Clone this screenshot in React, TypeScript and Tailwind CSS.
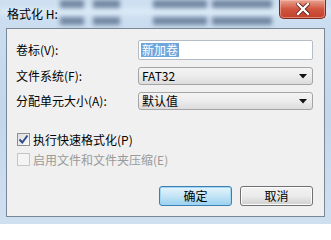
import React from "react";

const font = { fontFamily: '"Noto Sans CJK SC", "Liberation Sans", sans-serif' };

// blurred shapes behind the aero title bar
const blobs = [
  { l: 60, w: 24 },
  { l: 93, w: 27 },
  { l: 153, w: 54 },
  { l: 212, w: 60 },
];

function Combo({ value }: { value: string }) {
  return (
    <div className="flex items-center justify-between w-[175px] h-[18px] border border-[#a5a5a5] rounded-[3px] bg-gradient-to-b from-[#f4f4f4] via-[#ececec] to-[#dcdcdc] pl-[3px] pr-[5px]">
      <span className="text-[12px] leading-none text-black">{value}</span>
      <svg width="8" height="5" viewBox="0 0 8 5">
        <path d="M0 0 H8 L4 4.5 Z" fill="#111" />
      </svg>
    </div>
  );
}

function Check({ checked, disabled, label }: { checked?: boolean; disabled?: boolean; label: string }) {
  return (
    <div className="flex items-center gap-[3px] h-[13px]">
      <div
        className={`w-[13px] h-[13px] border flex items-center justify-center ${
          disabled ? "border-[#c6c6c6] bg-[#f4f4f4]" : "border-[#8e8f8f] bg-gradient-to-br from-[#dcdcdc] to-[#fbfbfb]"
        }`}
      >
        {checked && (
          <svg width="11" height="11" viewBox="0 0 11 11">
            <path d="M1.5 5.5 L4.3 8.5 L9.5 1.5" stroke="#2c4b8e" strokeWidth="2" fill="none" />
          </svg>
        )}
      </div>
      <span className={`text-[12px] leading-none ${disabled ? "text-[#9a9a9a]" : "text-black"}`}>{label}</span>
    </div>
  );
}

export default function App() {
  return (
    <div
      style={font}
      className="relative w-[331px] h-[224px] overflow-hidden flex flex-col bg-gradient-to-b from-[#cddff1] via-[#c3d6ea] to-[#cfe0f1]"
    >
      <div className="absolute left-0 right-0 top-[9px] h-[5px] bg-[#e6f0fa] blur-[3px]" />
      {blobs.map((b) => (
        <React.Fragment key={b.l}>
          <div
            className="absolute top-[0px] h-[8px] bg-[#7489a4] blur-[2px]"
            style={{ left: b.l, width: b.w }}
          />
          <div
            className="absolute top-[17px] h-[8px] bg-[#7489a4] blur-[2px]"
            style={{ left: b.l, width: b.w }}
          />
        </React.Fragment>
      ))}

      {/* title bar */}
      <div className="relative h-[28px] flex items-start justify-between pl-[7px]">
        <span className="mt-[8px] text-[12px] leading-none text-black">格式化 H:</span>
        <div className="mr-[5px] w-[47px] h-[19px] border border-t-0 border-[#7d2a1e] rounded-b-[5px] bg-gradient-to-b from-[#e8a493] via-[#d0553f] to-[#c4402a] flex items-center justify-center shadow-[inset_0_0_0_1px_rgba(255,200,190,0.5)]">
          <svg width="14" height="12" viewBox="0 0 14 12">
            <path d="M2 1 L12 11 M12 1 L2 11" stroke="#5a1a10" strokeWidth="4" strokeLinecap="square" />
            <path d="M2 1 L12 11 M12 1 L2 11" stroke="#ffffff" strokeWidth="2.4" strokeLinecap="square" />
          </svg>
        </div>
      </div>

      {/* client area */}
      <div className="relative mx-[6px] w-[319px] h-[189px] border border-[#7a8797] bg-[#f0f0f0] flex flex-col pl-[9px]">
        <div className="mt-[11px] flex items-center h-[20px]">
          <span className="w-[122px] text-[12px] leading-none text-black">卷标(V):</span>
          <div className="w-[175px] h-[20px] border border-[#b5bcc6] rounded-[2px] bg-white flex items-center pl-[2px]">
            <span className="bg-[#6fa6dc] text-white text-[12px] leading-[14px] px-[1px]">新加卷</span>
          </div>
        </div>
        <div className="mt-[7px] flex items-center h-[18px]">
          <span className="w-[122px] text-[12px] leading-none text-black">文件系统(F):</span>
          <Combo value="FAT32" />
        </div>
        <div className="mt-[7px] flex items-center h-[18px]">
          <span className="w-[122px] text-[12px] leading-none text-black">分配单元大小(A):</span>
          <Combo value="默认值" />
        </div>

        <div className="mt-[23px] flex flex-col gap-[7px] pl-[1px]">
          <Check checked label="执行快速格式化(P)" />
          <Check disabled label="启用文件和文件夹压缩(E)" />
        </div>

        <div className="mt-[20px] flex gap-[8px] pl-[143px]">
          <div className="w-[73px] h-[20px] rounded-[3px] border border-[#3c7fb1] bg-gradient-to-b from-[#e5f4fc] via-[#c4e5f6] to-[#98d1ef] flex items-center justify-center shadow-[inset_0_0_0_1px_#9fd6f5]">
            <span className="text-[12px] leading-none text-black">确定</span>
          </div>
          <div className="w-[73px] h-[20px] rounded-[3px] border border-[#707070] bg-gradient-to-b from-[#f2f2f2] via-[#ebebeb] to-[#cfcfcf] flex items-center justify-center shadow-[inset_0_0_0_1px_#fcfcfc]">
            <span className="text-[12px] leading-none text-black">取消</span>
          </div>
        </div>
      </div>
    </div>
  );
}
